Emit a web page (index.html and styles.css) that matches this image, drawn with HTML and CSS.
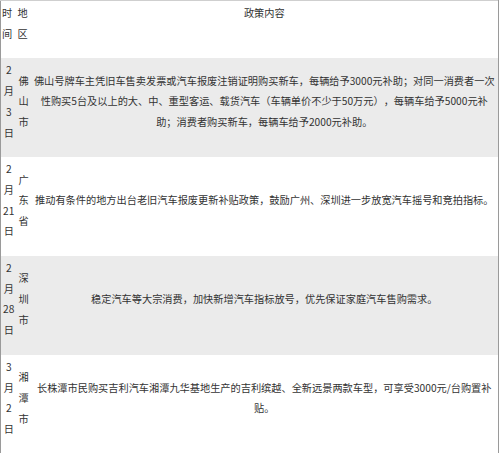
FILE: index.html
```
<!DOCTYPE html>
<html lang="zh-CN">
<head>
<meta charset="utf-8">
<title>政策内容</title>
<link rel="stylesheet" href="styles.css">
</head>
<body>
<table class="policy">
  <colgroup>
    <col class="c-date">
    <col class="c-region">
    <col class="c-text">
  </colgroup>
  <thead>
    <tr>
      <th class="h-side">时间</th>
      <th class="h-side">地区</th>
      <th class="h-main">政策内容</th>
    </tr>
  </thead>
  <tbody>
    <tr class="alt">
      <td class="date">2月3日</td>
      <td class="region">佛山市</td>
      <td class="text">佛山号牌车主凭旧车售卖发票或汽车报废注销证明购买新车，每辆给予3000元补助；对同一消费者一次性购买5台及以上的大、中、重型客运、载货汽车（车辆单价不少于50万元），每辆车给予5000元补助；消费者购买新车，每辆车给予2000元补助。</td>
    </tr>
    <tr>
      <td class="date">2月21日</td>
      <td class="region">广东省</td>
      <td class="text">推动有条件的地方出台老旧汽车报废更新补贴政策，鼓励广州、深圳进一步放宽汽车摇号和竞拍指标。</td>
    </tr>
    <tr class="alt">
      <td class="date">2月28日</td>
      <td class="region">深圳市</td>
      <td class="text">稳定汽车等大宗消费，加快新增汽车指标放号，优先保证家庭汽车售购需求。</td>
    </tr>
    <tr>
      <td class="date">3月2日</td>
      <td class="region">湘潭市</td>
      <td class="text">长株潭市民购买吉利汽车湘潭九华基地生产的吉利缤越、全新远景两款车型，可享受3000元/台购置补贴。</td>
    </tr>
  </tbody>
</table>
</body>
</html>
```

FILE: styles.css
```
html, body {
  margin: 0;
  padding: 0;
  background: #ffffff;
}

.policy {
  width: 499px;
  table-layout: fixed;
  border-collapse: collapse;
  border-left: 1px solid #9a9a9a;
  border-right: 1px solid #9a9a9a;
  border-top: 1px solid #cfcfcf;
  font-family: "Noto Sans CJK SC", "Noto Sans", sans-serif;
  font-size: 10.2px;
  line-height: 20.7px;
  color: #333333;
  text-spacing-trim: space-all;
}

.c-date { width: 16px; }
.c-region { width: 14px; }

.policy th,
.policy td {
  padding: 2px 1px 14px;
  vertical-align: middle;
  font-weight: normal;
}

.policy th {
  vertical-align: top;
}

.h-side {
  text-align: left;
}

.h-main {
  text-align: center;
}

.date,
.region,
.text {
  text-align: center;
}

.alt {
  background: #ebebeb;
}
```
